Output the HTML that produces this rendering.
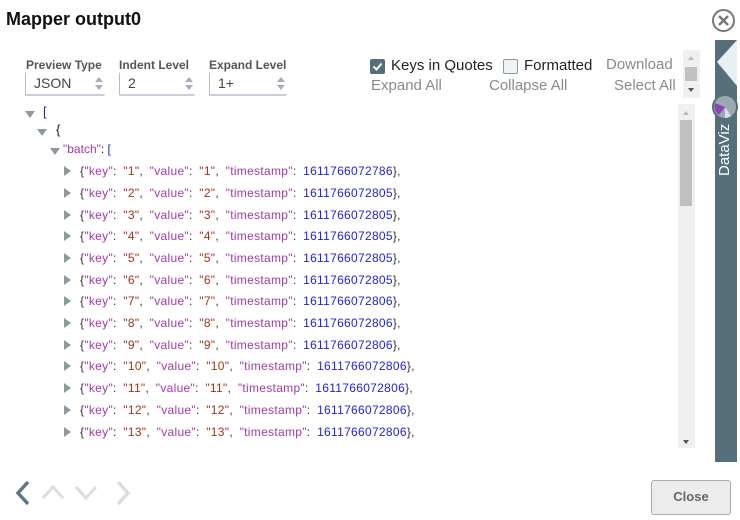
<!DOCTYPE html>
<html><head><meta charset="utf-8"><style>
*{margin:0;padding:0;box-sizing:border-box}
body{width:740px;height:520px;background:#fff;font-family:"Liberation Sans",sans-serif;position:relative;overflow:hidden;color:#222}
.abs{position:absolute}
.title{left:6px;top:9px;font-size:18px;font-weight:bold;color:#111}
.lbl{font-size:12px;font-weight:bold;color:#555;top:58px}
.sel{top:72px;height:24px;border-left:1px solid #bbb;border-bottom:2px solid #ccd;border-radius:2px;font-size:14px;color:#444;padding:3px 0 0 8px}
.sp{position:absolute;right:2px;top:5px;width:0;height:0;border-left:4px solid transparent;border-right:4px solid transparent;border-bottom:5px solid #aab}
.sp2{position:absolute;right:2px;top:13px;width:0;height:0;border-left:4px solid transparent;border-right:4px solid transparent;border-top:5px solid #aab}
.lnk{font-size:15px;color:#8a8a8a}
.row{position:absolute;left:64px;font-size:12px;white-space:nowrap;color:#333;letter-spacing:0.3px;word-spacing:3px}
.tri{display:inline-block;width:0;height:0;border-top:5px solid transparent;border-bottom:5px solid transparent;border-left:7px solid #8a9aa0;margin-right:9px;vertical-align:-1px}
.tdn{position:absolute;width:0;height:0;border-left:5px solid transparent;border-right:5px solid transparent;border-top:7px solid #8a9aa0}
.k{color:#a03aa8}.v{color:#a0331a}.n{color:#2323d0}
</style></head><body>
<div class="abs title">Mapper output0</div>
<svg class="abs" style="left:711px;top:8px" width="25" height="25" viewBox="0 0 25 25"><circle cx="12.5" cy="12.5" r="10.5" fill="none" stroke="#777" stroke-width="2"/><path d="M8 8L17 17M17 8L8 17" stroke="#777" stroke-width="2.4"/></svg>

<div class="abs lbl" style="left:26px">Preview Type</div>
<div class="abs lbl" style="left:119px">Indent Level</div>
<div class="abs lbl" style="left:209px">Expand Level</div>
<div class="abs sel" style="left:25px;width:80px">JSON<i class="sp"></i><i class="sp2"></i></div>
<div class="abs sel" style="left:119px;width:76px">2<i class="sp"></i><i class="sp2"></i></div>
<div class="abs sel" style="left:209px;width:78px">1+<i class="sp"></i><i class="sp2"></i></div>

<div class="abs" style="left:370px;top:59px;width:15px;height:15px;background:#546e7a;border-radius:2px"><svg width="15" height="15"><path d="M3.5 7.5L6.5 10.5L11.5 4.5" stroke="#fff" stroke-width="2" fill="none"/></svg></div>
<div class="abs" style="left:391px;top:57px;font-size:15px;color:#222">Keys in Quotes</div>
<div class="abs" style="left:503px;top:59px;width:15px;height:15px;border:1.5px solid #8a9aa0;background:#eef3f5;border-radius:2px"></div>
<div class="abs" style="left:524px;top:57px;font-size:15px;color:#222">Formatted</div>
<div class="abs lnk" style="left:606px;top:56px">Download</div>
<div class="abs lnk" style="left:371px;top:77px">Expand All</div>
<div class="abs lnk" style="left:489px;top:77px">Collapse All</div>
<div class="abs lnk" style="left:614px;top:77px">Select All</div>
<div class="abs" style="left:683px;top:50px;width:17px;height:48px;background:#f0f0f0"><div style="position:absolute;left:2px;top:17px;width:12px;height:14px;background:#c0c0c0"></div><div style="position:absolute;left:5px;top:38px;border-left:3px solid transparent;border-right:3px solid transparent;border-top:4px solid #555"></div><div style="position:absolute;left:5px;top:6px;border-left:3px solid transparent;border-right:3px solid transparent;border-bottom:4px solid #bbb"></div></div>

<div class="abs" style="left:678px;top:104px;width:17px;height:344px;background:#f0f0f0"><div style="position:absolute;left:2px;top:16px;width:12px;height:86px;background:#c0c0c0"></div><div style="position:absolute;left:5px;top:336px;border-left:3px solid transparent;border-right:3px solid transparent;border-top:4px solid #555"></div><div style="position:absolute;left:5px;top:7px;border-left:3px solid transparent;border-right:3px solid transparent;border-bottom:4px solid #bbb"></div></div>

<div class="abs" style="left:715px;top:40px;width:22px;height:422px;background:#546e7a"></div>
<svg class="abs" style="left:715px;top:40px" width="22" height="50"><path d="M22 0L2 22L22 46Z" fill="#e8f0f2"/></svg>
<svg class="abs" style="left:711px;top:93px" width="28" height="28"><circle cx="14" cy="14" r="12" fill="#9aaab0" stroke="#546e7a" stroke-width="2"/><path d="M14 14L4 10A11 11 0 0 0 8 22Z" fill="#8b45b5"/><path d="M14 14L20 23A11 11 0 0 1 14 25Z" fill="#dde"/></svg>
<div class="abs" style="left:716px;top:176px;transform:rotate(-90deg);transform-origin:left top;font-size:15px;color:#fff;width:60px">DataViz</div>

<i class="tdn" style="left:25px;top:111px"></i><div class="abs" style="left:43px;top:104px;font-size:13px;color:#2323d0">[</div>
<i class="tdn" style="left:37px;top:129px"></i><div class="abs" style="left:56px;top:122px;font-size:13px">{</div>
<i class="tdn" style="left:50px;top:148px"></i><div class="abs" style="left:63px;top:142px;font-size:12px"><span class="k">"batch"</span>: <span style="color:#2323d0">[</span></div>

<div class="row" style="top:164px"><i class="tri"></i>{<span class="k">"key"</span>: <span class="v">"1"</span>, <span class="k">"value"</span>: <span class="v">"1"</span>, <span class="k">"timestamp"</span>: <span class="n">1611766072786</span>},</div>
<div class="row" style="top:186px"><i class="tri"></i>{<span class="k">"key"</span>: <span class="v">"2"</span>, <span class="k">"value"</span>: <span class="v">"2"</span>, <span class="k">"timestamp"</span>: <span class="n">1611766072805</span>},</div>
<div class="row" style="top:208px"><i class="tri"></i>{<span class="k">"key"</span>: <span class="v">"3"</span>, <span class="k">"value"</span>: <span class="v">"3"</span>, <span class="k">"timestamp"</span>: <span class="n">1611766072805</span>},</div>
<div class="row" style="top:229px"><i class="tri"></i>{<span class="k">"key"</span>: <span class="v">"4"</span>, <span class="k">"value"</span>: <span class="v">"4"</span>, <span class="k">"timestamp"</span>: <span class="n">1611766072805</span>},</div>
<div class="row" style="top:251px"><i class="tri"></i>{<span class="k">"key"</span>: <span class="v">"5"</span>, <span class="k">"value"</span>: <span class="v">"5"</span>, <span class="k">"timestamp"</span>: <span class="n">1611766072805</span>},</div>
<div class="row" style="top:273px"><i class="tri"></i>{<span class="k">"key"</span>: <span class="v">"6"</span>, <span class="k">"value"</span>: <span class="v">"6"</span>, <span class="k">"timestamp"</span>: <span class="n">1611766072805</span>},</div>
<div class="row" style="top:294px"><i class="tri"></i>{<span class="k">"key"</span>: <span class="v">"7"</span>, <span class="k">"value"</span>: <span class="v">"7"</span>, <span class="k">"timestamp"</span>: <span class="n">1611766072806</span>},</div>
<div class="row" style="top:316px"><i class="tri"></i>{<span class="k">"key"</span>: <span class="v">"8"</span>, <span class="k">"value"</span>: <span class="v">"8"</span>, <span class="k">"timestamp"</span>: <span class="n">1611766072806</span>},</div>
<div class="row" style="top:338px"><i class="tri"></i>{<span class="k">"key"</span>: <span class="v">"9"</span>, <span class="k">"value"</span>: <span class="v">"9"</span>, <span class="k">"timestamp"</span>: <span class="n">1611766072806</span>},</div>
<div class="row" style="top:359px"><i class="tri"></i>{<span class="k">"key"</span>: <span class="v">"10"</span>, <span class="k">"value"</span>: <span class="v">"10"</span>, <span class="k">"timestamp"</span>: <span class="n">1611766072806</span>},</div>
<div class="row" style="top:381px"><i class="tri"></i>{<span class="k">"key"</span>: <span class="v">"11"</span>, <span class="k">"value"</span>: <span class="v">"11"</span>, <span class="k">"timestamp"</span>: <span class="n">1611766072806</span>},</div>
<div class="row" style="top:403px"><i class="tri"></i>{<span class="k">"key"</span>: <span class="v">"12"</span>, <span class="k">"value"</span>: <span class="v">"12"</span>, <span class="k">"timestamp"</span>: <span class="n">1611766072806</span>},</div>
<div class="row" style="top:425px"><i class="tri"></i>{<span class="k">"key"</span>: <span class="v">"13"</span>, <span class="k">"value"</span>: <span class="v">"13"</span>, <span class="k">"timestamp"</span>: <span class="n">1611766072806</span>},</div>

<svg class="abs" style="left:12px;top:478px" width="125" height="30" viewBox="0 0 125 30"><path d="M16 4L6 15L16 26" stroke="#5d7884" stroke-width="3.5" fill="none"/><path d="M31 20L41 9L51 20" stroke="#ddd" stroke-width="3" fill="none"/><path d="M64 9L74 20L84 9" stroke="#ddd" stroke-width="3" fill="none"/><path d="M106 4L116 15L106 26" stroke="#ddd" stroke-width="3.5" fill="none"/></svg>
<div class="abs" style="left:651px;top:480px;width:80px;height:35px;border:1.5px solid #aaa;background:#ececec;border-radius:3px;text-align:center;line-height:32px;font-size:13px;font-weight:bold;color:#666">Close</div>
</body></html>
